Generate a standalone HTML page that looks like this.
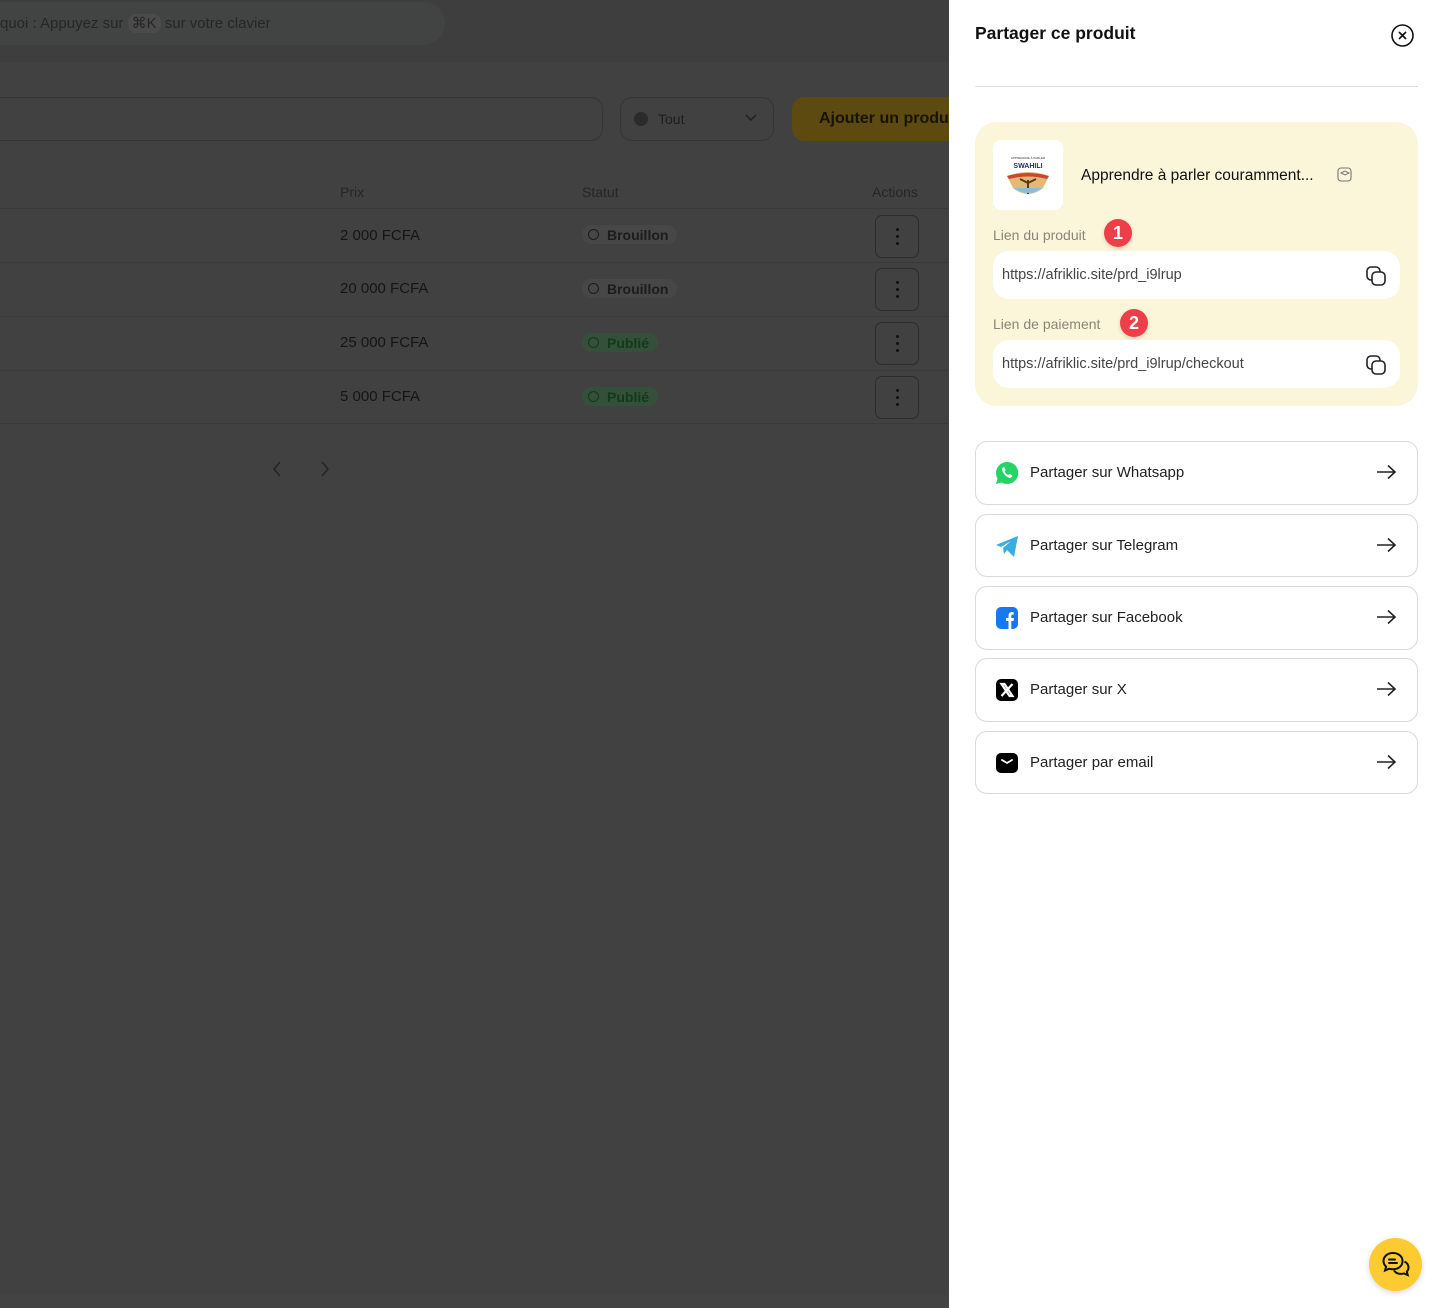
<!DOCTYPE html>
<html><head><meta charset="utf-8"><style>
*{box-sizing:border-box;margin:0;padding:0}
body{width:1444px;height:1308px;position:relative;overflow:hidden;background:#414141;font-family:"Liberation Sans",sans-serif;}
.a{position:absolute}
.row{position:absolute;left:0;width:949px;height:1px;background:#3a3a3a}
.price{position:absolute;left:340px;font-size:15px;color:#151515}
.badge{position:absolute;left:582px;height:19px;border-radius:10px;font-size:14px;font-weight:bold;padding:1px 9px 0 25px;line-height:18px}
.bro{background:#474747;color:#1c1c1c}
.pub{background:#35503a;color:#103a18}
.bico{position:absolute;left:6px;top:4px;width:11px;height:11px;border:1.3px solid #1c1c1c;border-radius:50%}
.pub .bico{border-color:#103a18}
.act{position:absolute;left:875px;width:44px;height:43px;border:1px solid #2c2c2c;border-radius:7px}
.act i{position:absolute;left:20px;width:3px;height:3px;border-radius:50%;background:#111}
.panel{position:absolute;left:949px;top:0;width:495px;height:1308px;background:#fff}
.card{position:absolute;left:975px;top:122px;width:443px;height:284px;background:#fbf5d9;border-radius:22px}
.lbl{position:absolute;left:18px;font-size:14px;color:#8a8578}
.inp{position:absolute;left:18px;width:407px;height:48px;background:#fff;border-radius:16px;font-size:14.5px;color:#444;padding:16px 9px}
.num{position:absolute;width:28px;height:28px;border-radius:50%;background:#ee3e48;color:#fff;font-weight:bold;font-size:18px;text-align:center;line-height:28px;box-shadow:0 2px 4px rgba(0,0,0,.15)}
.cp{position:absolute;right:13px;top:14px}
.sh{position:absolute;left:975px;width:443px;height:64px;border:1px solid #d9d9d9;border-radius:12px}
.sh span{position:absolute;left:54px;top:22px;font-size:15px;color:#222}
.sh .ic{position:absolute;left:19px;top:19px;width:24px;height:24px}
.sh .ar{position:absolute;right:20px;top:22px}
</style></head><body>
<div class="a" style="left:0;top:0;width:949px;height:62px;background:#3d3e3d"></div>
<div class="a" style="left:-20px;top:2px;width:465px;height:43px;border-radius:22px;background:#424443"></div>
<div class="a" style="left:0;top:14px;font-size:15px;color:#262626">quoi : Appuyez sur <span style="background:#4b4b4b;border-radius:8px;padding:1px 4px">⌘K</span> sur votre clavier</div>
<div class="a" style="left:-10px;top:97px;width:613px;height:44px;border:1px solid #353535;border-radius:12px"></div>
<div class="a" style="left:620px;top:97px;width:154px;height:44px;border:1px solid #353535;border-radius:12px"></div>
<div class="a" style="left:634px;top:112px;width:14px;height:14px;border-radius:50%;background:#2b2b2b"></div>
<div class="a" style="left:658px;top:111px;font-size:14px;color:#1e1e1e">Tout</div>
<svg class="a" style="left:744px;top:112px" width="14" height="12"><path d="M2 3l5 5 5-5" stroke="#1e1e1e" stroke-width="1.4" fill="none"/></svg>
<div class="a" style="left:792px;top:97px;width:170px;height:44px;border-radius:12px;background:#5c4a10"></div>
<div class="a" style="left:819px;top:110px;font-size:16px;font-weight:bold;color:#171307">Ajouter un produit</div>
<div class="a" style="left:340px;top:184px;font-size:14px;color:#262626">Prix</div>
<div class="a" style="left:582px;top:184px;font-size:14px;color:#262626">Statut</div>
<div class="a" style="left:872px;top:184px;font-size:14px;color:#262626">Actions</div>
<div class="row" style="top:208px"></div>
<div class="row" style="top:262px"></div>
<div class="row" style="top:316px"></div>
<div class="row" style="top:370px"></div>
<div class="row" style="top:423px"></div>
<div class="price" style="top:227px">2 000 FCFA</div>
<div class="price" style="top:280px">20 000 FCFA</div>
<div class="price" style="top:334px">25 000 FCFA</div>
<div class="price" style="top:388px">5 000 FCFA</div>
<div class="badge bro" style="top:225px"><span class="bico"></span>Brouillon</div>
<div class="badge bro" style="top:279px"><span class="bico"></span>Brouillon</div>
<div class="badge pub" style="top:333px"><span class="bico"></span>Publié</div>
<div class="badge pub" style="top:387px"><span class="bico"></span>Publié</div>
<div class="act" style="top:215px"><i style="top:12px"></i><i style="top:19px"></i><i style="top:26px"></i></div>
<div class="act" style="top:268px"><i style="top:12px"></i><i style="top:19px"></i><i style="top:26px"></i></div>
<div class="act" style="top:322px"><i style="top:12px"></i><i style="top:19px"></i><i style="top:26px"></i></div>
<div class="act" style="top:376px"><i style="top:12px"></i><i style="top:19px"></i><i style="top:26px"></i></div>
<svg class="a" style="left:270px;top:460px" width="70" height="20"><path d="M10 2l-6 7 6 7M52 2l6 7-6 7" stroke="#222" stroke-width="1.4" fill="none"/></svg>
<div class="a" style="left:0;top:1295px;width:949px;height:13px;background:#434343"></div>

<div class="panel"></div>
<div class="a" style="left:975px;top:23px;font-size:17.5px;font-weight:bold;color:#111">Partager ce produit</div>
<svg class="a" style="left:1390px;top:23px" width="25" height="25"><circle cx="12.5" cy="12.5" r="10.5" stroke="#111" stroke-width="1.6" fill="none"/><path d="M9 9l7 7M16 9l-7 7" stroke="#111" stroke-width="1.6"/></svg>
<div class="a" style="left:975px;top:86px;width:443px;height:1px;background:#ddd"></div>

<div class="card">
 <div class="a" style="left:18px;top:18px;width:70px;height:70px;background:#fff;border-radius:8px">
  <div class="a" style="left:0;top:16px;width:70px;text-align:center;font-size:3px;color:#333">APPRENDRE À PARLER</div>
  <div class="a" style="left:0;top:23px;width:70px;text-align:center;font-size:7px;font-weight:bold;color:#1d2d5a">SWAHILI</div>
  <svg class="a" style="left:12px;top:30px" width="46" height="28"><path d="M2 6Q23 -2 44 6L38 18Q23 30 8 18Z" fill="#e5b975"/><path d="M2 6Q23 0 44 6L42 9Q23 4 4 9Z" fill="#c9462f"/><path d="M23 10V24M23 13L15 9M23 13L31 9" stroke="#5a3a1a" stroke-width="2"/><path d="M8 18Q23 28 38 18" fill="#8bbcd8"/></svg>
 </div>
 <div class="a" style="left:106px;top:45px;font-size:15.5px;color:#111">Apprendre à parler couramment...</div>
 <svg class="a" style="left:362px;top:45px" width="15" height="15"><rect x="1" y="1" width="13" height="13" rx="3" stroke="#777" fill="none" stroke-width="1.1"/><path d="M4 6l4-2 4 2-4 2z" stroke="#777" fill="none" stroke-width="1"/></svg>
 <div class="lbl" style="top:105px">Lien du produit</div>
 <div class="num" style="left:129px;top:97px">1</div>
 <div class="inp" style="top:129px">https://afriklic.site/prd_i9lrup
  <svg class="cp" width="22" height="22"><rect x="2" y="2" width="13" height="13" rx="4" stroke="#222" fill="#fff" stroke-width="1.6"/><rect x="7" y="7" width="13" height="13" rx="4" stroke="#222" fill="#fff" stroke-width="1.6"/></svg></div>
 <div class="lbl" style="top:194px">Lien de paiement</div>
 <div class="num" style="left:145px;top:187px">2</div>
 <div class="inp" style="top:218px">https://afriklic.site/prd_i9lrup/checkout
  <svg class="cp" width="22" height="22"><rect x="2" y="2" width="13" height="13" rx="4" stroke="#222" fill="#fff" stroke-width="1.6"/><rect x="7" y="7" width="13" height="13" rx="4" stroke="#222" fill="#fff" stroke-width="1.6"/></svg></div>
</div>

<div class="sh" style="top:441px"><svg class="ic" viewBox="0 0 24 24"><path d="M12 1A11 11 0 0 0 2.5 17.5L1 23l5.7-1.5A11 11 0 1 0 12 1z" fill="#25d366"/><path d="M8 6.5c.5-.5 1.2-.4 1.5.2l1 2c.2.4 0 .8-.3 1.1l-.6.6c.7 1.6 1.9 2.9 3.6 3.6l.6-.6c.3-.3.8-.5 1.1-.3l2 1c.6.3.7 1 .2 1.5l-.8.8c-1 1-3.5.4-6-2S6.5 8.5 7.3 7.3z" fill="#fff"/></svg><span>Partager sur Whatsapp</span><svg class="ar" width="21" height="16"><path d="M1 8h18M12 1.5L19 8l-7 6.5" stroke="#222" stroke-width="1.6" fill="none"/></svg></div>
<div class="sh" style="top:514px;height:63px"><svg class="ic" viewBox="0 0 24 24"><path d="M1 11L23 2 19 23 12 16l-3 4-1-6 8-7-10 6z" fill="#37aee2"/></svg><span>Partager sur Telegram</span><svg class="ar" width="21" height="16"><path d="M1 8h18M12 1.5L19 8l-7 6.5" stroke="#222" stroke-width="1.6" fill="none"/></svg></div>
<div class="sh" style="top:586px"><svg class="ic" viewBox="0 0 24 24"><rect x="1" y="1" width="22" height="22" rx="5" fill="#1877f2"/><path d="M13.5 23v-8h-2.5v-3h2.5v-2.3c0-2.4 1.4-3.7 3.6-3.7.8 0 1.6.1 1.6.1v2.5h-1c-1 0-1.4.6-1.4 1.3V12h2.7l-.4 3h-2.3v8z" fill="#fff"/></svg><span>Partager sur Facebook</span><svg class="ar" width="21" height="16"><path d="M1 8h18M12 1.5L19 8l-7 6.5" stroke="#222" stroke-width="1.6" fill="none"/></svg></div>
<div class="sh" style="top:658px"><svg class="ic" viewBox="0 0 24 24"><rect x="1" y="1" width="22" height="22" rx="5" fill="#000"/><path d="M6.5 6h3l8 12h-3zM17.5 6l-11 12" stroke="#fff" stroke-width="2.2" fill="none"/></svg><span>Partager sur X</span><svg class="ar" width="21" height="16"><path d="M1 8h18M12 1.5L19 8l-7 6.5" stroke="#222" stroke-width="1.6" fill="none"/></svg></div>
<div class="sh" style="top:731px;height:63px"><svg class="ic" viewBox="0 0 24 24"><rect x="1" y="2" width="22" height="20" rx="5" fill="#000"/><path d="M7 9l5 3 5-3" stroke="#fff" stroke-width="1.8" fill="none" stroke-linecap="round"/></svg><span>Partager par email</span><svg class="ar" width="21" height="16"><path d="M1 8h18M12 1.5L19 8l-7 6.5" stroke="#222" stroke-width="1.6" fill="none"/></svg></div>

<div class="a" style="left:1369px;top:1238px;width:53px;height:53px;border-radius:50%;background:#fccb31;box-shadow:0 2px 6px rgba(0,0,0,.15)"></div>
<svg class="a" style="left:1380px;top:1249px" width="32" height="32" viewBox="0 0 32 32"><path d="M13 4C7.5 4 3.5 7.5 3.5 12c0 2.2 1 4.2 2.6 5.6L5 21.5l4.2-1.8c1.2.4 2.5.6 3.8.6 5.5 0 9.5-3.5 9.5-8.2S18.5 4 13 4z" fill="none" stroke="#111" stroke-width="2"/><path d="M24.5 12.5c2.4 1.3 4 3.5 4 6 0 1.6-.6 3-1.7 4.2l.9 3.3-3.6-1.6c-1 .3-2 .5-3.1.5-3 0-5.6-1.3-7-3.4" fill="none" stroke="#111" stroke-width="2"/><path d="M9 10.5h6M9 14h8" stroke="#111" stroke-width="2" stroke-linecap="round"/></svg>
</body></html>
